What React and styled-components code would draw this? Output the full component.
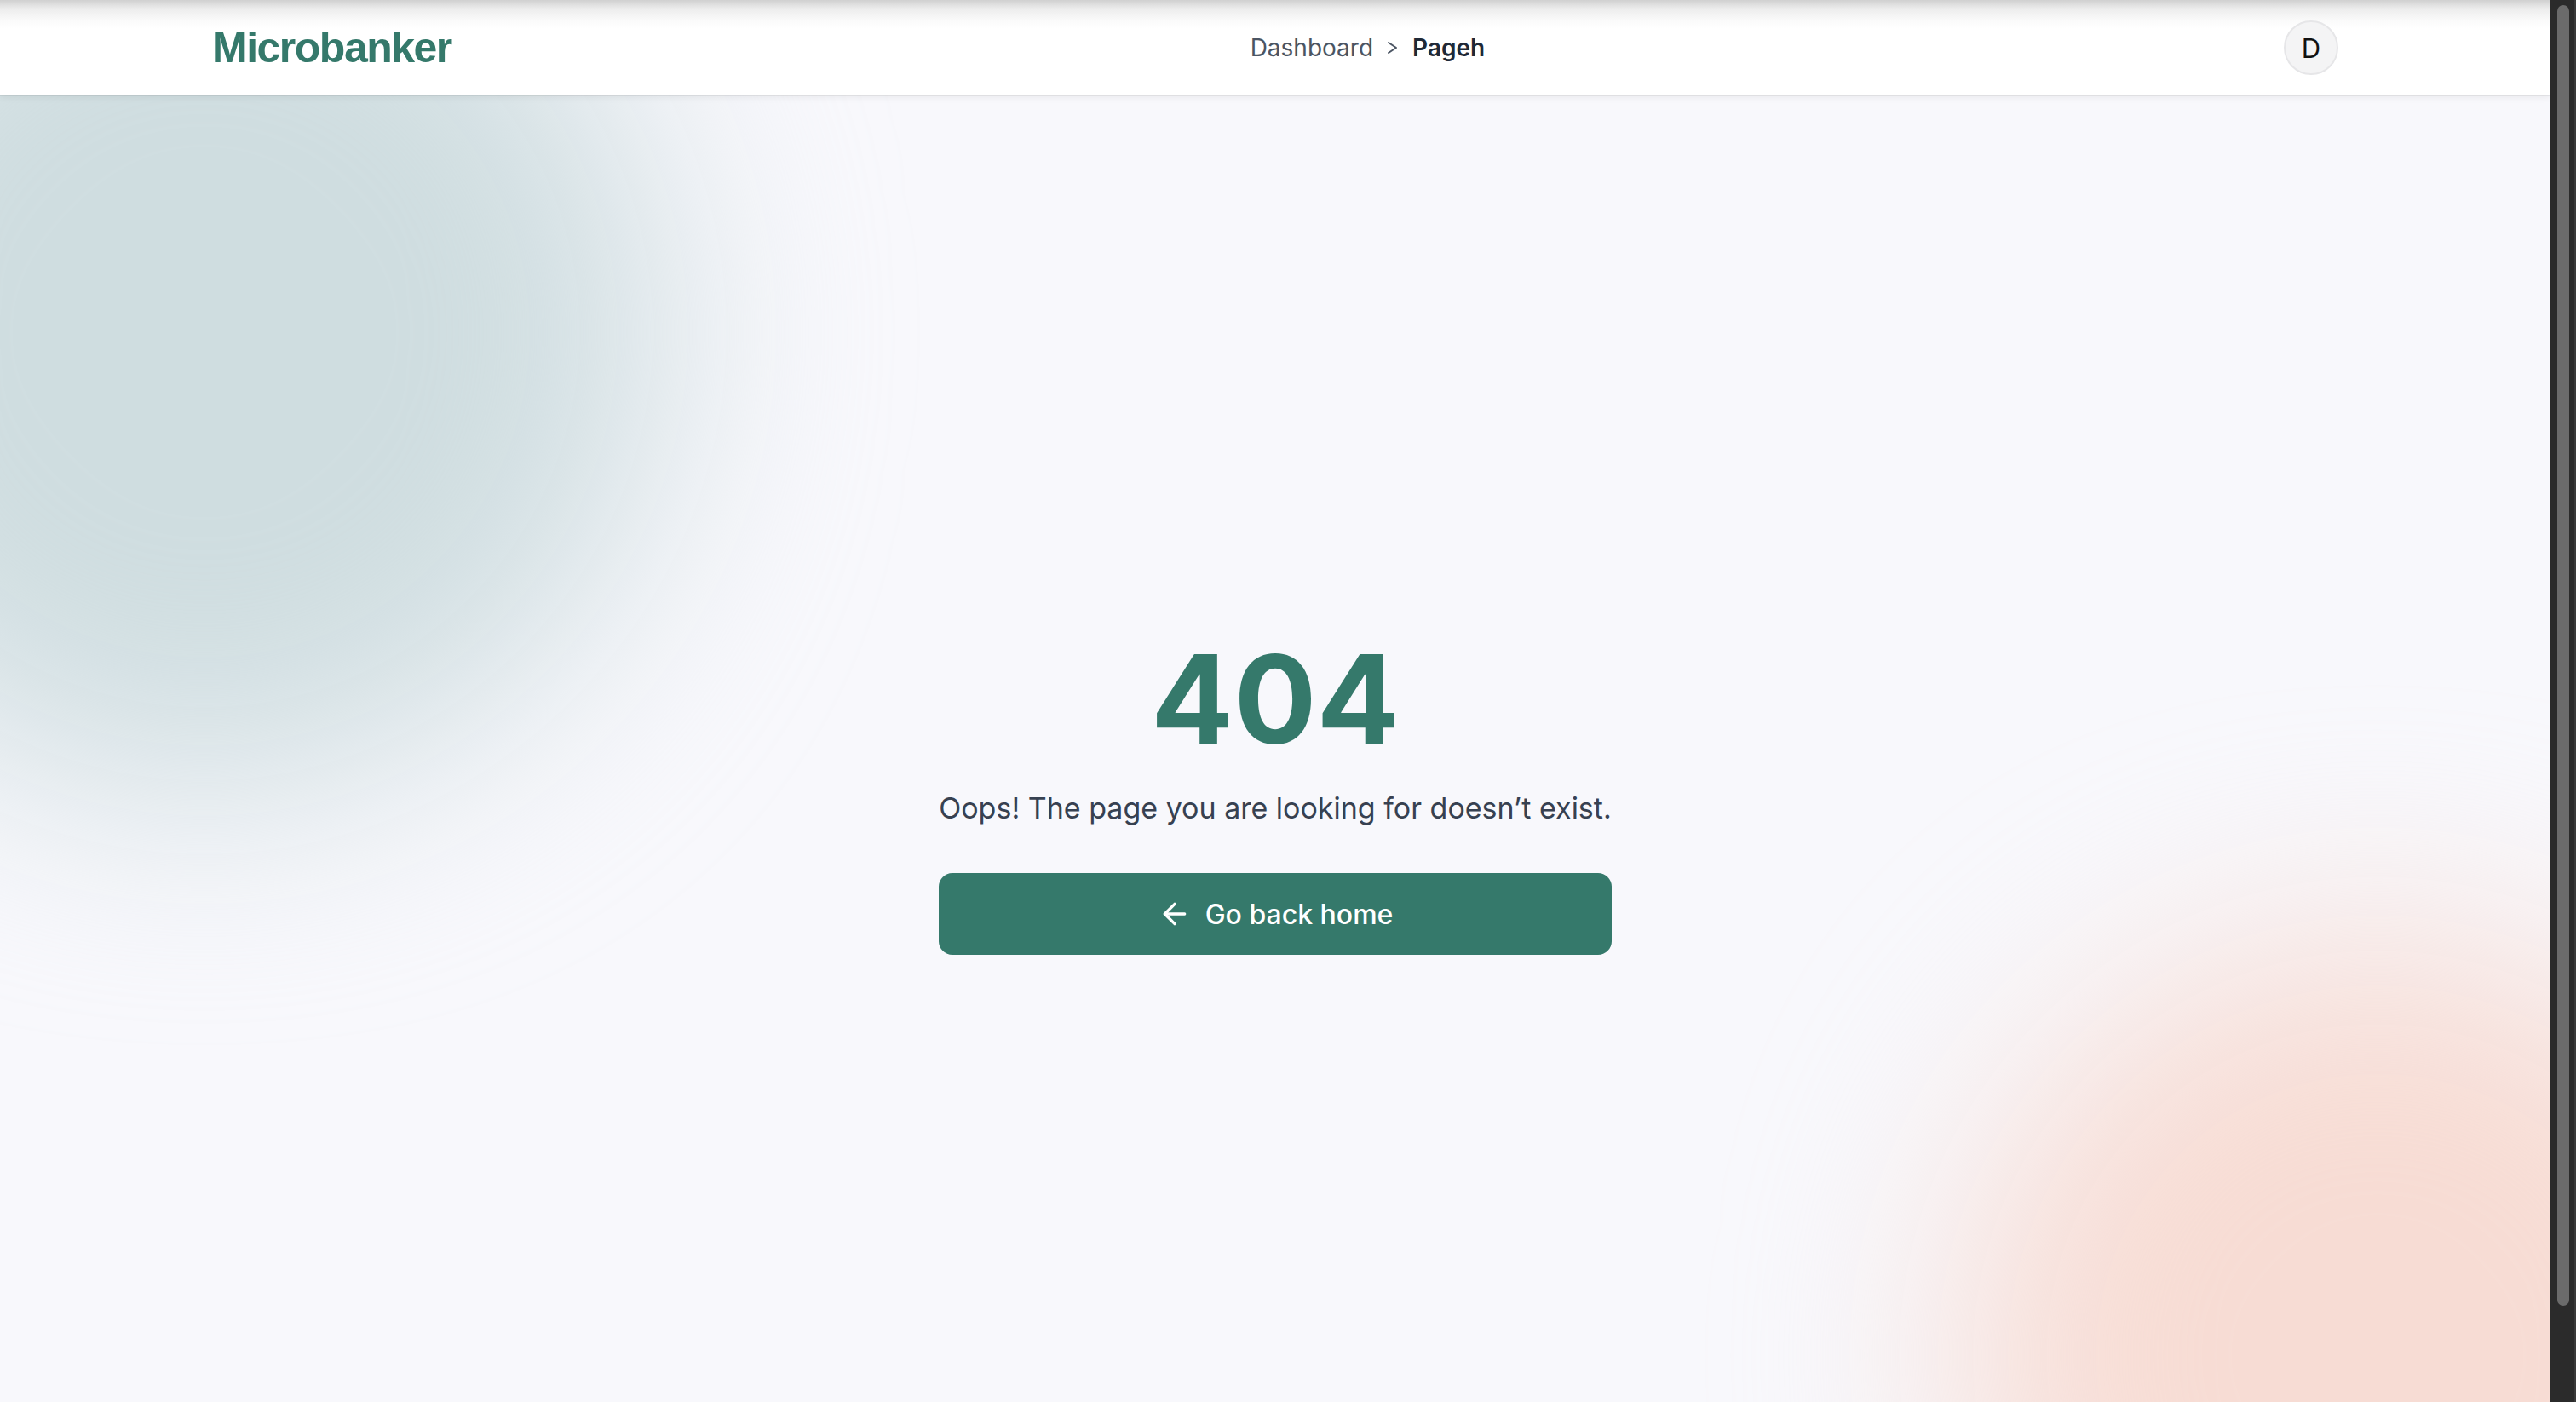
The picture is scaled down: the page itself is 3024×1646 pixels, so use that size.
import React from 'react'
import styled, { createGlobalStyle } from 'styled-components'
import { ArrowLeft } from 'lucide-react'

const GlobalStyle = createGlobalStyle`
  * { box-sizing: border-box; }
  html, body {
    margin: 0;
    height: 100%;
    overflow: hidden;
  }
  #root { height: 100%; }
`;

const Frame = styled.div`
  height: 100vh;
  display: flex;
  font-family: Inter, "Noto Sans", sans-serif;
`;

const Viewport = styled.div`
  flex: 1;
  min-width: 0;
  overflow: hidden;
  background: #f8f8fc;
`;

const ScrollTrack = styled.div`
  width: 30px;
  flex-shrink: 0;
  background: #2b2b2b;
  padding: 6px 6px 0 8px;
  border-right: 2px solid #3a3a3a;
`;

const ScrollThumb = styled.div`
  height: 1527px;
  border-radius: 8px;
  background: #6b6b6b;
`;

const Page = styled.div`
  position: relative;
  overflow: hidden;
`;

const Backdrop = styled.div`
  position: absolute;
  inset: 0;
  z-index: 0;
  pointer-events: none;
`;

const Blob = styled.div`
  position: absolute;
  left: ${p => p.$x - p.$r}px;
  top: ${p => p.$y - p.$r}px;
  width: ${p => p.$r * 2}px;
  height: ${p => p.$r * 2}px;
  border-radius: 50%;
  background: ${p => p.$color};
  filter: blur(128px);
`;

const Header = styled.header`
  position: relative;
  z-index: 2;
  height: 112px;
  background: linear-gradient(#d0d0d0 0px, #ececec 10px, #fafafa 24px, #ffffff 34px);
  box-shadow: 0 1px 0 rgba(0, 0, 0, 0.06), 0 2px 8px rgba(0, 0, 0, 0.07);
`;

const HeaderInner = styled.div`
  max-width: 2560px;
  height: 100%;
  margin: 0 auto;
  padding: 0 32px;
  display: flex;
  align-items: center;
  justify-content: space-between;
`;

const Logo = styled.div`
  font-family: "Liberation Sans", Arial, sans-serif;
  font-size: 50px;
  font-weight: 700;
  letter-spacing: -1.5px;
  color: #35796b;
`;

const Breadcrumb = styled.nav`
  display: flex;
  align-items: center;
  gap: 16px;
  font-size: 28px;
`;

const Crumb = styled.span`
  color: ${p => (p.$current ? '#1f2937' : '#4b5563')};
  font-weight: ${p => (p.$current ? 600 : 400)};
`;

const Avatar = styled.div`
  width: 64px;
  height: 64px;
  border-radius: 50%;
  background: #f4f4f5;
  border: 2px solid #e6e6e8;
  display: grid;
  place-items: center;
  font-size: 31px;
  color: #111;
`;

const Main = styled.main`
  position: relative;
  z-index: 1;
  min-height: 100vh;
  display: flex;
  align-items: center;
  justify-content: center;
`;

const Content = styled.div`
  display: inline-flex;
  flex-direction: column;
  align-items: stretch;
  text-align: center;
`;

const Code = styled.h1`
  margin: 0;
  font-size: 144px;
  font-weight: 700;
  line-height: 1;
  color: #35796b;
`;

const Message = styled.p`
  margin: 28px 0 48px;
  font-size: 34px;
  line-height: 56px;
  color: #374151;
`;

const HomeButton = styled.button`
  height: 96px;
  border: none;
  border-radius: 16px;
  background: #35796b;
  color: #fff;
  font-family: inherit;
  font-size: 32px;
  font-weight: 500;
  display: flex;
  align-items: center;
  justify-content: center;
  gap: 16px;
  cursor: pointer;
`;

function Chevron() {
  return (
    <svg width="14" height="16" viewBox="0 0 14 16" fill="none">
      <path d="M2 2 L11 8 L2 14" stroke="#4b5563" strokeWidth="2" strokeLinecap="round" strokeLinejoin="round" />
    </svg>
  )
}

export default function App() {
  return (
    <>
      <GlobalStyle />
      <Frame>
        <Viewport>
          <Page>
            <Backdrop>
              <Blob $x={240} $y={390} $r={540} $color="#cfdde0" />
              <Blob $x={2791} $y={1591} $r={490} $color="#f7dcd4" />
            </Backdrop>
            <Header>
              <HeaderInner>
                <Logo>Microbanker</Logo>
                <Breadcrumb>
                  <Crumb>Dashboard</Crumb>
                  <Chevron />
                  <Crumb $current>Pageh</Crumb>
                </Breadcrumb>
                <Avatar>D</Avatar>
              </HeaderInner>
            </Header>
            <Main>
              <Content>
                <Code>404</Code>
                <Message>Oops! The page you are looking for doesn’t exist.</Message>
                <HomeButton>
                  <ArrowLeft size={40} strokeWidth={2} />
                  Go back home
                </HomeButton>
              </Content>
            </Main>
          </Page>
        </Viewport>
        <ScrollTrack>
          <ScrollThumb />
        </ScrollTrack>
      </Frame>
    </>
  )
}
